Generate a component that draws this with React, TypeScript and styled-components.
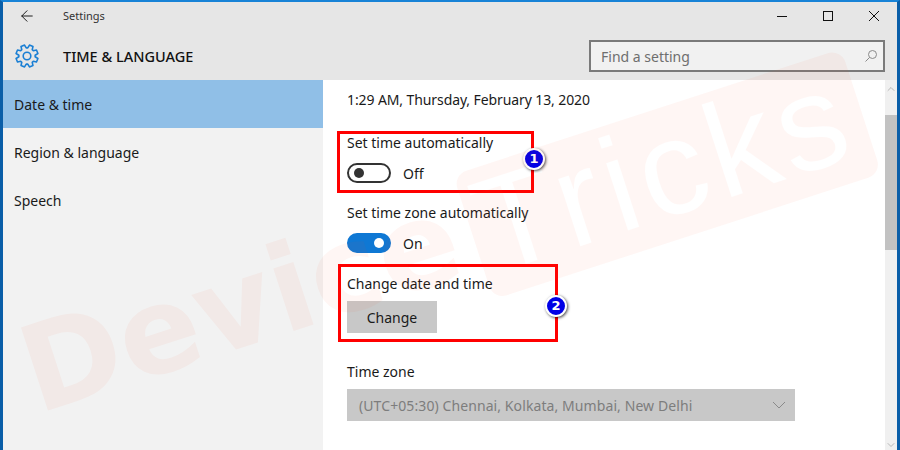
import React from "react";
import styled, { createGlobalStyle } from "styled-components";
import { ArrowLeft, ChevronDown, ChevronUp } from "lucide-react";

const GlobalStyle = createGlobalStyle`
  html, body {
    margin: 0;
    padding: 0;
    background: #0a5ea8;
  }
  * {
    box-sizing: border-box;
  }
`;

const Window = styled.div`
  position: relative;
  width: 900px;
  height: 450px;
  overflow: hidden;
  display: flex;
  flex-direction: column;
  border-top: 2px solid #1883d7;
  border-left: 3px solid #0a5ea8;
  border-right: 3px solid #0a5ea8;
  font-family: "Noto Sans", "Open Sans", sans-serif;
  font-size: 14px;
  color: #1a1a1a;
`;

const Header = styled.header`
  height: 78px;
  flex: none;
  background: #e6e6e6;
  display: flex;
  flex-direction: column;
`;

const TitleBar = styled.div`
  height: 30px;
  flex: none;
  display: flex;
  align-items: center;
  padding: 0 0 3px 15px;
`;

const TitleText = styled.span`
  margin-left: 27px;
  font-size: 11px;
  color: #333;
`;

const WindowButtons = styled.div`
  margin-left: auto;
  display: flex;
  align-items: center;
  gap: 36px;
  padding-right: 18px;
`;

const SectionBar = styled.div`
  flex: 1;
  display: flex;
  align-items: center;
  padding: 0 12px;
`;

const SectionTitle = styled.h1`
  margin: 0 0 0 24px;
  font-size: 14.5px;
  font-weight: 500;
  color: #111;
`;

const SearchBox = styled.div`
  margin-left: auto;
  width: 296px;
  height: 32px;
  border: 2px solid #7a7a7a;
  background: #f1f1f1;
  display: flex;
  align-items: center;
  justify-content: space-between;
  padding: 0 6px 0 10px;
  color: #6e6e6e;
`;

const Body = styled.div`
  flex: 1;
  display: flex;
  min-height: 0;
`;

const Sidebar = styled.nav`
  width: 320px;
  flex: none;
  background: #f2f2f2;
`;

const NavItem = styled.div<{ $active?: boolean }>`
  height: 48px;
  display: flex;
  align-items: center;
  padding-left: 11px;
  background: ${(props) => (props.$active ? "#90bfe7" : "transparent")};
`;

const Content = styled.main`
  flex: 1;
  background: #fff;
  padding: 9px 24px 0;
`;

const DateLine = styled.div`
  height: 24px;
  line-height: 22px;
  letter-spacing: -0.1px;
`;

const Group = styled.section<{ $gap: number }>`
  margin-top: ${(props) => props.$gap}px;
`;

const Label = styled.div`
  height: 24px;
  line-height: 24px;
`;

const ToggleRow = styled.div`
  display: flex;
  align-items: center;
  gap: 12px;
  height: 26px;
  margin-top: 5px;
`;

const Track = styled.div<{ $on?: boolean }>`
  width: 44px;
  height: 20px;
  border-radius: 10px;
  display: flex;
  align-items: center;
  padding: 0 5px;
  justify-content: ${(props) => (props.$on ? "flex-end" : "flex-start")};
  background: ${(props) => (props.$on ? "#0f78d4" : "#fff")};
  border: 2px solid ${(props) => (props.$on ? "#0f78d4" : "#333")};
`;

const Knob = styled.div<{ $on?: boolean }>`
  width: 10px;
  height: 10px;
  border-radius: 50%;
  background: ${(props) => (props.$on ? "#fff" : "#333")};
`;

const ChangeButton = styled.button`
  display: block;
  margin-top: 5px;
  width: 90px;
  height: 32px;
  border: none;
  background: #c8c8c8;
  color: #1a1a1a;
  font: inherit;
`;

const Select = styled.div`
  margin-top: 5px;
  width: 448px;
  height: 32px;
  background: #c8c8c8;
  color: #7d7d7d;
  display: flex;
  align-items: center;
  justify-content: space-between;
  padding: 0 9px 0 12px;
  letter-spacing: 0.09px;
`;

const ScrollBar = styled.div`
  width: 12px;
  flex: none;
  background: #f0f0f0;
  display: flex;
  flex-direction: column;
  align-items: center;
  color: #a6a6a6;
`;

const Thumb = styled.div`
  width: 12px;
  height: 135px;
  margin-top: 21px;
  background: #c2c2c2;
`;

const ScrollEnd = styled.div`
  margin-top: auto;
  height: 14px;
`;

const ScrollStart = styled.div`
  height: 14px;
`;

const Callout = styled.div<{ $left: number; $top: number; $width: number; $height: number }>`
  position: absolute;
  left: ${(props) => props.$left}px;
  top: ${(props) => props.$top}px;
  width: ${(props) => props.$width}px;
  height: ${(props) => props.$height}px;
  border: 3px solid #f00;
`;

const Badge = styled.div<{ $right: number; $top: number }>`
  position: absolute;
  right: ${(props) => props.$right}px;
  top: ${(props) => props.$top}px;
  width: 22px;
  height: 22px;
  border-radius: 50%;
  background: #0000e6;
  border: 2px solid #fff;
  box-shadow: 1px 1px 3px rgba(0, 0, 0, 0.7);
  color: #fff;
  font-family: "DejaVu Sans", sans-serif;
  font-size: 13px;
  font-weight: 700;
  line-height: 18px;
  text-align: center;
`;

const WatermarkLayer = styled.svg`
  position: absolute;
  left: -3px;
  top: -2px;
  pointer-events: none;
`;

const DeviceWord = styled.text`
  font-family: "DejaVu Sans", sans-serif;
  font-size: 120px;
  font-weight: 700;
`;

const TricksWord = styled.text`
  font-family: "Liberation Sans", sans-serif;
  font-size: 134px;
`;

// cog outline with 8 teeth, as in the settings app header
function gearPath(cx: number, cy: number, outer: number, inner: number) {
  const points: string[] = [];
  for (let i = 0; i < 8; i++) {
    const mid = (i * Math.PI) / 4 + Math.PI / 8;
    const steps: [number, number][] = [
      [inner, mid - 0.3],
      [outer, mid - 0.17],
      [outer, mid + 0.17],
      [inner, mid + 0.3],
    ];
    steps.forEach(([r, a]) => {
      const x = (cx + r * Math.cos(a)).toFixed(2);
      const y = (cy + r * Math.sin(a)).toFixed(2);
      points.push(`${points.length === 0 ? "M" : "L"}${x} ${y}`);
    });
  }
  return points.join(" ") + " Z";
}

function GearIcon() {
  return (
    <svg width="24" height="24" viewBox="0 0 24 24" fill="none" stroke="#1a7fd4" strokeWidth="1.6">
      <path d={gearPath(12, 12, 11.2, 8.2)} strokeLinejoin="round" />
      <circle cx="12" cy="12" r="3.8" />
    </svg>
  );
}

function MinimizeIcon() {
  return (
    <svg width="10" height="10" viewBox="0 0 10 10" stroke="#111" strokeWidth="1">
      <line x1="0" y1="5.5" x2="10" y2="5.5" />
    </svg>
  );
}

function MaximizeIcon() {
  return (
    <svg width="10" height="10" viewBox="0 0 10 10" fill="none" stroke="#111" strokeWidth="1">
      <rect x="0.5" y="0.5" width="9" height="9" />
    </svg>
  );
}

function CloseIcon() {
  return (
    <svg width="10" height="10" viewBox="0 0 10 10" stroke="#111" strokeWidth="1">
      <line x1="0" y1="0" x2="10" y2="10" />
      <line x1="10" y1="0" x2="0" y2="10" />
    </svg>
  );
}

function SearchGlass() {
  return (
    <svg width="12" height="12" viewBox="0 0 12 12" fill="none" stroke="#8a8a8a" strokeWidth="1">
      <circle cx="7.5" cy="4.5" r="4" />
      <line x1="4.6" y1="7.4" x2="0.5" y2="11.5" />
    </svg>
  );
}

function SelectChevron() {
  return (
    <svg width="14" height="8" viewBox="0 0 14 8" fill="none" stroke="#8a8a8a" strokeWidth="1">
      <polyline points="1,1 7,7 13,1" />
    </svg>
  );
}

function Watermark() {
  const tint = "rgba(255, 80, 30, 0.05)";
  return (
    <WatermarkLayer width="900" height="450" viewBox="0 0 900 450">
      <defs>
        <mask id="band-cut" maskUnits="userSpaceOnUse" x="-100" y="-100" width="1200" height="500">
          <rect x="-100" y="-100" width="1200" height="500" fill="#fff" />
          <TricksWord x="466" y="107" fill="#000" textLength={382} lengthAdjust="spacing">
            Tricks
          </TricksWord>
        </mask>
      </defs>
      <g transform="translate(16.5 316.8) rotate(-18)">
        <DeviceWord x="-10" y="99" fill={tint}>
          Device
        </DeviceWord>
        <rect x="459" y="0" width="408" height="131" rx="14" fill={tint} mask="url(#band-cut)" />
      </g>
    </WatermarkLayer>
  );
}

export default function App() {
  return (
    <>
      <GlobalStyle />
      <Window>
        <Header>
          <TitleBar>
            <ArrowLeft size={18} strokeWidth={1.25} color="#111" />
            <TitleText>Settings</TitleText>
            <WindowButtons>
              <MinimizeIcon />
              <MaximizeIcon />
              <CloseIcon />
            </WindowButtons>
          </TitleBar>
          <SectionBar>
            <GearIcon />
            <SectionTitle>TIME &amp; LANGUAGE</SectionTitle>
            <SearchBox>
              Find a setting
              <SearchGlass />
            </SearchBox>
          </SectionBar>
        </Header>
        <Body>
          <Sidebar>
            <NavItem $active>Date &amp; time</NavItem>
            <NavItem>Region &amp; language</NavItem>
            <NavItem>Speech</NavItem>
          </Sidebar>
          <Content>
            <DateLine>1:29 AM, Thursday, February 13, 2020</DateLine>
            <Group $gap={18}>
              <Label>Set time automatically</Label>
              <ToggleRow>
                <Track>
                  <Knob />
                </Track>
                Off
              </ToggleRow>
            </Group>
            <Group $gap={15}>
              <Label>Set time zone automatically</Label>
              <ToggleRow>
                <Track $on>
                  <Knob $on />
                </Track>
                On
              </ToggleRow>
            </Group>
            <Group $gap={16}>
              <Label>Change date and time</Label>
              <ChangeButton>Change</ChangeButton>
            </Group>
            <Group $gap={27}>
              <Label>Time zone</Label>
              <Select>
                (UTC+05:30) Chennai, Kolkata, Mumbai, New Delhi
                <SelectChevron />
              </Select>
            </Group>
          </Content>
          <ScrollBar>
            <ScrollStart>
              <ChevronUp size={12} strokeWidth={1.5} />
            </ScrollStart>
            <Thumb />
            <ScrollEnd>
              <ChevronDown size={12} strokeWidth={1.5} />
            </ScrollEnd>
          </ScrollBar>
        </Body>
        <Callout $left={334} $top={129} $width={197} $height={62}>
          <Badge $right={-14} $top={14}>1</Badge>
        </Callout>
        <Callout $left={335} $top={262} $width={220} $height={78}>
          <Badge $right={-12} $top={28}>2</Badge>
        </Callout>
        <Watermark />
      </Window>
    </>
  );
}
